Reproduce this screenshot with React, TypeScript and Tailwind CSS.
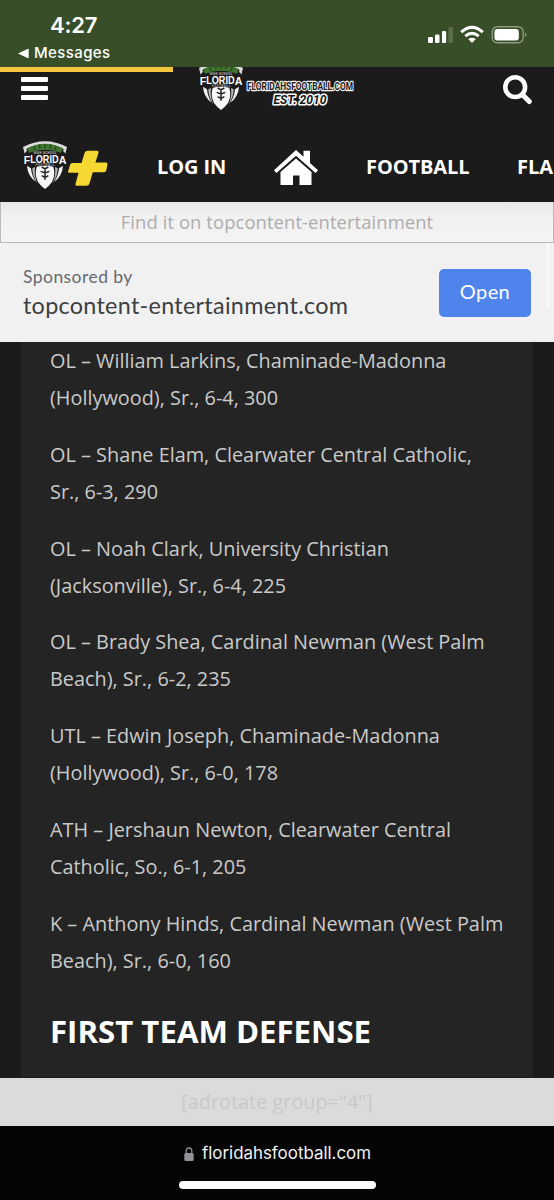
import React from "react";

const players = [
  ["OL – William Larkins, Chaminade-Madonna", "(Hollywood), Sr., 6-4, 300"],
  ["OL – Shane Elam, Clearwater Central Catholic,", "Sr., 6-3, 290"],
  ["OL – Noah Clark, University Christian", "(Jacksonville), Sr., 6-4, 225"],
  ["OL – Brady Shea, Cardinal Newman (West Palm", "Beach), Sr., 6-2, 235"],
  ["UTL – Edwin Joseph, Chaminade-Madonna", "(Hollywood), Sr., 6-0, 178"],
  ["ATH – Jershaun Newton, Clearwater Central", "Catholic, So., 6-1, 205"],
  ["K – Anthony Hinds, Cardinal Newman (West Palm", "Beach), Sr., 6-0, 160"],
];

function Shield() {
  return (
    <svg viewBox="0 0 132 144" className="block h-12 w-11 shrink-0">
      <path d="M0 18Q66-16 132 18L127 38Q124 32 120 30L122 24Q66-6 10 24L12 30Q8 32 5 38Z" fill="#dcdcdc" />
      <path d="M12 22Q66-6 120 22L114 35Q66 18 18 35Z" fill="#40752f" />
      <path d="M32 16l5 12M49 11l2 12M66 9v12M83 11l-2 12M100 16l-5 12" stroke="#27481f" strokeWidth="4" />
      <path d="M12 74L24 82Q26 104 38 122Q14 104 12 74ZM120 74L108 82Q106 104 94 122Q118 104 120 74Z" fill="#f2f2f2" />
      <path d="M28 82L36 78Q32 104 44 128Q28 106 28 82ZM104 82L96 78Q100 104 88 128Q104 106 104 82Z" fill="#b9b9b9" />
      <path d="M41 77Q66 72 91 77Q98 101 87 123Q76 138 66 144Q56 138 45 123Q34 101 41 77Z" fill="#f6f6f6" />
      <path d="M66 80v36M56 78l10 6 10-6M53 91l13 5 13-5M56 104l10 5 10-5" fill="none" stroke="#222" strokeWidth="4.5" />
      <text x="2" y="69" fontSize="35" fontWeight="700" textLength="128" lengthAdjust="spacingAndGlyphs" fill="#fff" fontFamily="Liberation Sans, sans-serif">
        F<tspan fontSize="30" dy="-4">LORID</tspan><tspan dy="4">A</tspan>
      </text>
      <text x="66" y="38" textAnchor="middle" fontSize="8" fontWeight="700" textLength="68" fill="#d5d5d5" fontFamily="Liberation Sans, sans-serif">HIGH SCHOOL</text>
      <text x="66" y="75" textAnchor="middle" fontSize="8" fontWeight="700" textLength="56" fill="#bdbdbd" fontFamily="Liberation Sans, sans-serif">FOOTBALL</text>
    </svg>
  );
}

function Wordmark() {
  return (
    <svg viewBox="0 0 112 32" className="block h-8 w-28 shrink-0 overflow-visible" fontFamily="Roboto, sans-serif" fontWeight="700" strokeLinejoin="round" paintOrder="stroke">
      <text x="2" y="12.6" fontSize="10.8" textLength="106" lengthAdjust="spacingAndGlyphs" fill="#1b1b1b" stroke="#f5f5f5" strokeWidth="2.4">FLORIDAHSFOOTBALL.COM</text>
      <text x="28.5" y="27" fontSize="13" fontStyle="italic" textLength="53" lengthAdjust="spacingAndGlyphs" fill="#151515" stroke="#fff" strokeWidth="3.2">EST. 2010</text>
    </svg>
  );
}

function StatusIcons() {
  return (
    <svg viewBox="0 0 102 20" className="block h-5 w-[102px]">
      <rect x="1" y="12" width="5" height="6" rx="1.3" fill="#fff" />
      <rect x="8" y="9.5" width="4.5" height="8.5" rx="1.3" fill="#fff" />
      <rect x="15" y="6" width="4.2" height="12" rx="1.3" fill="#fff" />
      <rect x="21.5" y="2" width="4.5" height="16" rx="1.3" fill="#5a6d49" />
      <g fill="none" stroke="#fff" strokeWidth="3">
        <path d="M34.2 7.2Q45-2.5 55.8 7.2" />
        <path d="M38.3 11.2Q45 5.5 51.7 11.2" />
      </g>
      <path d="M41.2 14Q45 11.5 48.8 14L45 18Z" fill="#fff" />
      <rect x="65.2" y="1.7" width="31" height="16" rx="5" fill="none" stroke="#8c9a7e" strokeWidth="1.4" />
      <rect x="67.4" y="4" width="24.4" height="11.6" rx="3" fill="#fff" />
      <path d="M98 7.2Q101 9.7 98 12.2Z" fill="#8c9a7e" />
    </svg>
  );
}

export default function App() {
  return (
    <div className="flex h-[1200px] w-[554px] flex-col overflow-hidden bg-[#1b1b1b] font-['Open_Sans',sans-serif]">
      <div className="flex h-[67px] shrink-0 items-start justify-between bg-[#384e28] text-white">
        <div className="pl-[18px] pt-[11px] font-['Inter',sans-serif]">
          <div className="pl-8 text-[22px] leading-7 font-semibold tracking-[-0.2px]">4:27</div>
          <div className="flex h-7 items-center gap-[5px]">
            <svg viewBox="0 0 11 11" className="h-[11px] w-[11px]"><path d="M0 5.5L10 .7Q10.7.5 10.7 1.5V9.5Q10.7 10.5 10 10.3Z" fill="#fff" /></svg>
            <span className="text-[15px] font-medium tracking-[0.4px]">Messages</span>
          </div>
        </div>
        <div className="pr-[25px] pt-[25px]"><StatusIcons /></div>
      </div>

      <div className="h-[135px] shrink-0 overflow-hidden bg-[#1b1b1b]">
        <div className="h-[5px] w-[173px] bg-[#f4c63d]" />
        <div className="-mt-[5px] flex h-[60px] items-start">
          <div className="flex w-[199px] flex-col gap-[4px] pl-[21px] pt-[10px]">
            <div className="h-[5px] w-[27px] rounded-[1px] bg-white" />
            <div className="h-[5px] w-[27px] rounded-[1px] bg-white" />
            <div className="h-[5px] w-[27px] rounded-[1px] bg-white" />
          </div>
          <div className="-mt-[5px]"><Shield /></div>
          <div className="ml-[2px] pt-[10px]"><Wordmark /></div>
          <svg viewBox="0 0 30 30" className="ml-auto mr-[22px] mt-[8px] h-[30px] w-[30px]" fill="none" stroke="#fff" strokeWidth="4.5" strokeLinecap="round">
            <circle cx="13.2" cy="12.2" r="9.9" />
            <path d="M20.5 19.7L27.3 26.5" strokeWidth="5" />
          </svg>
        </div>
        <div className="flex h-[75px] items-center whitespace-nowrap pl-[23px] pt-[4px] text-[20px] font-bold text-white">
          <div className="mb-[3px] flex shrink-0 items-center">
            <Shield />
            <svg viewBox="0 0 124 110" className="mt-[6px] h-[37px] w-[41px]">
              <path d="M64 1H90Q97 1 95 8L86 37H117Q124 38 122 45L119 60Q118 66 111 66H78L68 100Q66 107 59 107H31Q24 107 26 100L35 68H9Q1 68 4 61L9 45Q10 38 17 38H44L53 8Q55 1 64 1Z" fill="#f5d832" />
            </svg>
          </div>
          <span className="ml-[49px] w-[117px] shrink-0 tracking-[-0.1px]">LOG IN</span>
          <svg viewBox="0 0 44 36" className="mt-[2px] h-9 w-11 shrink-0" fill="#fff">
            <path d="M22 0L29.5 6.8V.7H36V13L44 20.3 41.6 23 22 5.8 2.4 23 0 20.3Z" />
            <path d="M22 8.5L37.5 22V35H25.5V25.5H19V35H6.5V22Z" />
          </svg>
          <span className="ml-[48px] w-[151px] shrink-0 tracking-[-0.1px]">FOOTBALL</span>
          <span className="shrink-0">FLA</span>
        </div>
      </div>

      <div className="flex h-[41px] shrink-0 items-center justify-center border border-t-0 border-[#b9babb] bg-linear-to-b from-[#e7e7e7] via-[#f1f1f1] via-35% to-[#f3f3f3] text-[18.4px] text-[#adadad]">
        <span className="tracking-[0.1px]">Find it on topcontent-entertainment</span>
      </div>
      <div className="flex h-[99px] shrink-0 justify-between bg-[#f1f1f1] pl-[23px] font-['Lato',sans-serif]">
        <div className="whitespace-nowrap pt-[22px]">
          <div className="text-[17.5px] leading-6 tracking-[0.45px] text-[#66696d]">Sponsored by</div>
          <div className="text-[23.4px] leading-8 tracking-[0.28px] text-[#3c3e41]">topcontent-entertainment.com</div>
        </div>
        <div className="flex">
          <div className="mt-[26px] flex h-[48px] w-[92px] items-center justify-center rounded-[5px] bg-[#5084ed] pb-[4px] text-[20px] tracking-[0.4px] text-white">Open</div>
          <div className="ml-[15px] mr-[4px] h-[65px] w-[4px] rounded-b bg-[#f8f8f8]" />
        </div>
      </div>

      <div className="mx-[21px] h-[735px] shrink-0 overflow-hidden bg-[#242424] pl-[29px] text-[19.87px] leading-[37px] text-[#cacaca]">
        {players.map(([first, second]) => (
          <p key={first} className="mb-[19.8px] whitespace-nowrap">
            {first}<br />{second}
          </p>
        ))}
        <h2 className="text-[31.2px] leading-[64px] font-bold text-white">FIRST TEAM DEFENSE</h2>
      </div>

      <div className="flex h-[49px] shrink-0 items-center justify-center border-t border-[#1b1b1b] bg-[#dbdbdb] text-[19.87px] text-[#c9c9c9]">[adrotate group="4"]</div>
      <div className="flex h-[74px] shrink-0 flex-col items-center bg-[#050505]">
        <div className="mt-[14px] flex h-7 items-center gap-[8px] pl-px font-['Inter',sans-serif] text-[16.9px] text-[#f2f2f2]">
          <svg viewBox="0 0 10 14" className="h-[14px] w-[10px]">
            <rect x=".3" y="6" width="9.4" height="8" rx="1.5" fill="#919196" />
            <path d="M2.2 7V4Q2.2 1 5 1T7.8 4V7" fill="none" stroke="#919196" strokeWidth="1.3" />
          </svg>
          <span>floridahsfootball.com</span>
        </div>
        <div className="mt-[13px] h-[8px] w-[197px] rounded-full bg-white" />
      </div>
    </div>
  );
}
